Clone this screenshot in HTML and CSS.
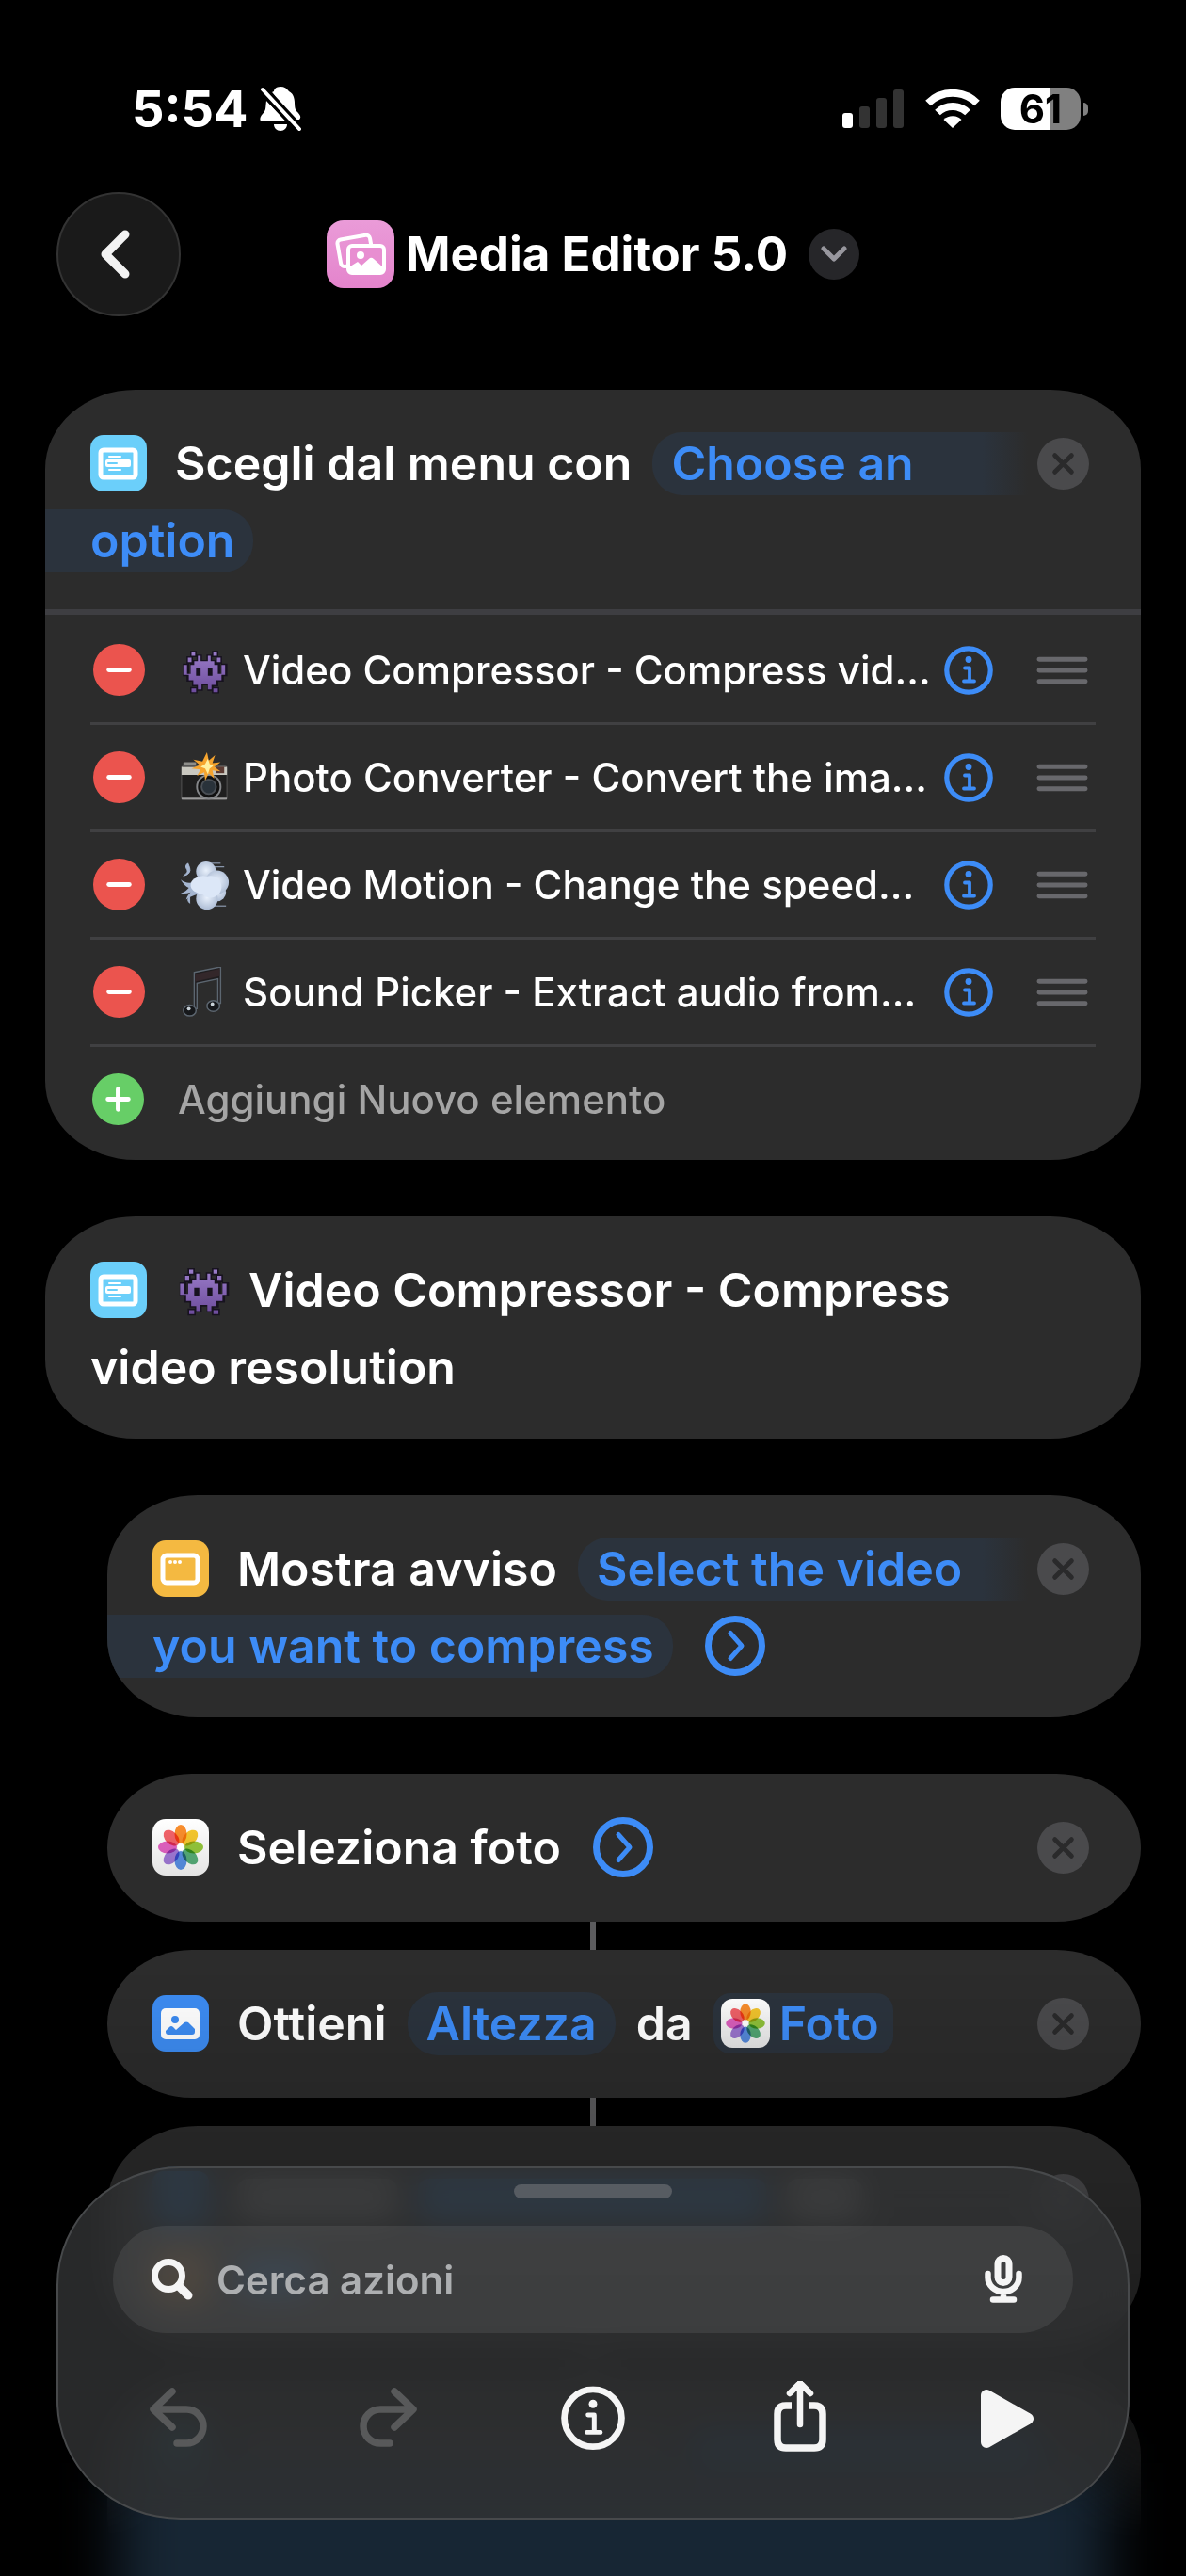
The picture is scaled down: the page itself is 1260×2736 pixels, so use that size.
FILE: index.html
```html
<!DOCTYPE html>
<html lang="it">
<head>
    <meta charset="UTF-8">
    <meta name="viewport" content="width=device-width, initial-scale=1.0">
    <title>Media Editor 5.0</title>
    <link rel="stylesheet" href="styles.css">
</head>
<body>
    <!-- Shared icons -->
    <svg class="sprite" aria-hidden="true">
        <defs>
            <linearGradient id="pink" x1="0" y1="0" x2="0" y2="1">
                <stop offset="0" stop-color="#ea9bd8"/>
                <stop offset="1" stop-color="#e484cc"/>
            </linearGradient>
            <linearGradient id="paper" x1="0" y1="0" x2="0" y2="1">
                <stop offset="0" stop-color="#ffffff"/>
                <stop offset="1" stop-color="#e4e4e4"/>
            </linearGradient>
            <linearGradient id="purple" x1="0" y1="0" x2="0" y2="1">
                <stop offset="0" stop-color="#9a7cc9"/>
                <stop offset="1" stop-color="#6d4c9c"/>
            </linearGradient>
            <radialGradient id="puff" cx="0.5" cy="0.45" r="0.6">
                <stop offset="0" stop-color="#e9f1fc"/>
                <stop offset="1" stop-color="#a9b9d2"/>
            </radialGradient>
        </defs>
        <symbol id="icon-menu" viewBox="0 0 60 60">
            <rect width="60" height="60" rx="14" fill="#6bcffa"/>
            <rect x="11" y="16" width="37" height="29" rx="3" fill="none" stroke="#fff" stroke-width="5"/>
            <rect x="16" y="26" width="27" height="8" rx="2" fill="#fff"/>
            <path d="M20 23h12M20 37h12" stroke="#fff" stroke-width="2" stroke-linecap="round"/>
            <path d="M19 30h9" stroke="#6bcffa" stroke-width="2" stroke-linecap="round"/>
        </symbol>
        <symbol id="icon-alert" viewBox="0 0 60 60">
            <rect width="60" height="60" rx="14" fill="#f4b941"/>
            <rect x="11" y="16" width="37" height="29" rx="4" fill="none" stroke="#fff" stroke-width="5"/>
            <circle cx="19" cy="23" r="2" fill="#fff"/>
            <circle cx="24" cy="23" r="2" fill="#fff"/>
            <circle cx="29" cy="23" r="2" fill="#fff"/>
        </symbol>
        <symbol id="icon-image" viewBox="0 0 60 60">
            <rect width="60" height="60" rx="14" fill="#3d8cf2"/>
            <rect x="9" y="14" width="41" height="33" rx="5" fill="#fff"/>
            <circle cx="24" cy="26" r="4" fill="#3d8cf2"/>
            <path d="M14 38l4-4q2-2 4 0l3 3 9-8q2-1 4 0l7 7v3q0 3-3 3H17q-3 0-3-3z" fill="#3d8cf2"/>
        </symbol>
        <symbol id="icon-photos" viewBox="0 0 60 60">
            <rect width="60" height="60" rx="14" fill="url(#paper)"/>
            <g class="petals">
                <ellipse cx="30" cy="16" rx="6.5" ry="10" fill="#fb8f2d"/>
                <ellipse cx="30" cy="16" rx="6.5" ry="10" fill="#f7c92e" transform="rotate(45 30 30)"/>
                <ellipse cx="30" cy="16" rx="6.5" ry="10" fill="#96ca3c" transform="rotate(90 30 30)"/>
                <ellipse cx="30" cy="16" rx="6.5" ry="10" fill="#57b07a" transform="rotate(135 30 30)"/>
                <ellipse cx="30" cy="16" rx="6.5" ry="10" fill="#5b93ea" transform="rotate(180 30 30)"/>
                <ellipse cx="30" cy="16" rx="6.5" ry="10" fill="#a47cdb" transform="rotate(225 30 30)"/>
                <ellipse cx="30" cy="16" rx="6.5" ry="10" fill="#e563c5" transform="rotate(270 30 30)"/>
                <ellipse cx="30" cy="16" rx="6.5" ry="10" fill="#f5636a" transform="rotate(315 30 30)"/>
            </g>
            <circle cx="30" cy="30" r="3.5" fill="#fff"/>
        </symbol>
        <symbol id="icon-close" viewBox="0 0 56 56">
            <circle cx="28" cy="28" r="28" fill="#4a4a4c"/>
            <path d="M19 19l18 18M37 19L19 37" stroke="#2a2a2b" stroke-width="5" stroke-linecap="round"/>
        </symbol>
        <symbol id="icon-remove" viewBox="0 0 56 56">
            <circle cx="28" cy="28" r="28" fill="#eb544e"/>
            <path d="M17 28h22" stroke="#fff" stroke-width="5" stroke-linecap="round"/>
        </symbol>
        <symbol id="icon-add" viewBox="0 0 56 56">
            <circle cx="28" cy="28" r="28" fill="#67ce67"/>
            <path d="M17 28h22M28 17v22" stroke="#fff" stroke-width="5" stroke-linecap="round"/>
        </symbol>
        <symbol id="icon-info" viewBox="0 0 52 52">
            <circle cx="26" cy="26" r="23.2" fill="none" stroke="currentColor" stroke-width="5.2"/>
            <circle cx="26" cy="14.5" r="3.4" fill="currentColor"/>
            <path d="M22 23.500h5V37M21 37.500h11" fill="none" stroke="currentColor" stroke-width="3.8" stroke-linecap="round" stroke-linejoin="round"/>
        </symbol>
        <symbol id="icon-grip" viewBox="0 0 56 32">
            <path d="M3 4h50M3 16h50M3 28h50" stroke="#68686c" stroke-width="5" stroke-linecap="round"/>
        </symbol>
        <symbol id="icon-expand" viewBox="0 0 64 64">
            <circle cx="32" cy="32" r="28.5" fill="none" stroke="#3d8cf7" stroke-width="7"/>
            <path d="M27 18.500L39 32 27 45.500" fill="none" stroke="#3d8cf7" stroke-width="5" stroke-linecap="round" stroke-linejoin="round"/>
        </symbol>
        <symbol id="emoji-alien" viewBox="0 0 56 56">
            <g stroke="#17121f" stroke-width="3" fill="#17121f">
                <path d="M14 8h4v4h-4zM38 8h4v4h-4zM10 14h4v5h-4zM42 14h4v5h-4zM21 12h3v6h8v-6h3v6h4v4h5v12h4V22h4v11h-4v6h-6v5h-5v5h-4v-6H25v6h-4v-5h-5v-5h-6v-6H6V22h4v12h4V22h3v-4h4zM14 48h5v4h-5zM38 48h5v4h-5z"/>
            </g>
            <path fill="url(#purple)" d="M14 8h4v4h-4zM38 8h4v4h-4zM10 14h4v5h-4zM42 14h4v5h-4zM21 12h3v6h8v-6h3v6h4v4h4v10h4V22h4v11h-4v6h-6v5h-5v5h-4v-6H25v6h-4v-5h-5v-5h-5v-6H5V22h4v10h4V22h4v-4h4zM14 48h5v4h-5zM38 48h5v4h-5z"/>
            <path d="M19 26h5v8h-5zM32 26h5v8h-5z" fill="#17121f"/>
        </symbol>
        <symbol id="emoji-camera" viewBox="0 0 56 56">
            <rect x="5" y="11" width="14" height="6" rx="1" fill="#8e8e8a"/>
            <rect x="3" y="15" width="50" height="37" rx="2" fill="#1f1f1f" stroke="#555" stroke-width="1"/>
            <path d="M3 16h50v9H3z" fill="#c9c8c0"/>
            <rect x="41" y="16" width="9" height="7" fill="#5c3b33"/>
            <path d="M3 51h50" stroke="#9b9b9b" stroke-width="2"/>
            <circle cx="33" cy="38" r="13" fill="#111" stroke="#85878a" stroke-width="2"/>
            <circle cx="33" cy="38" r="8" fill="#29323a" stroke="#4a4f55" stroke-width="2"/>
            <path d="M31 0l2 9 7-6-3 9 9-1-7 5 7 5-9-1 2 9-6-6-4 8-1-9-8 4 4-7-10-1 9-4-7-6 10 2z" fill="#f6a42e"/>
            <path d="M32 7l2 6 4 2-4 3-2 6-3-6-5-2 5-3z" fill="#fff0a0"/>
        </symbol>
        <symbol id="emoji-wind" viewBox="0 0 56 56">
            <path d="M2 22q10 8 24-2l4 16q-14 2-22 8 2-6 5-8-6 2-11 1 6-2 9-6-5-2-9-9z" fill="#a5b6d1"/>
            <path d="M10 4q-4 3-1 7 2 3-4 7 9-2 7-9zM33 4h13M36 8h14M38 51h14M12 41q-4 3 0 7z" fill="#a5b6d1" stroke="#a5b6d1"/>
            <circle cx="42" cy="36" r="10" fill="url(#puff)"/>
            <circle cx="30" cy="13" r="11" fill="url(#puff)"/>
            <circle cx="31" cy="43" r="12" fill="url(#puff)"/>
            <circle cx="42" cy="25" r="13" fill="url(#puff)"/>
            <ellipse cx="27" cy="28" rx="14" ry="10" fill="#dce7f7"/>
            <circle cx="35" cy="30" r="12" fill="#dce7f7"/>
        </symbol>
        <symbol id="emoji-note" viewBox="0 0 56 56">
            <path d="M17 6l29-6v40h-3V13l-23 5v28h-3z" fill="#1f1d1f" stroke="#5c6670" stroke-width="1.5"/>
            <path d="M18 8l27-6v8l-27 6z" fill="#33272a"/>
            <ellipse cx="12" cy="48" rx="7" ry="6" fill="#16181b" stroke="#5c6670" stroke-width="1.5"/>
            <ellipse cx="38" cy="43" rx="7" ry="6" fill="#16181b" stroke="#5c6670" stroke-width="1.5"/>
            <circle cx="11" cy="46" r="2" fill="#c9d2d8"/>
            <circle cx="37" cy="41" r="2" fill="#c9d2d8"/>
        </symbol>
    </svg>

    <div class="screen">
        <div class="status-bar">
            <div class="status-left">
                <span class="clock">5:54</span>
                <svg class="bell" viewBox="0 0 44 48">
                    <path d="M22 1c-5 0-7 3-7 5l-2 1 22 29h7c3-3 0-6-3-9-3-4-1-9-3-15-1-4-4-5-6-7-1-2-4-4-8-4zM7 16c-1 7 0 10-4 14-3 3-4 8 0 8h25zM15 41h14c0 4-3 7-7 7s-7-3-7-7z" fill="#fff"/>
                    <path d="M3 4l39 42" stroke="#000" stroke-width="10"/>
                    <path d="M3 4l39 42" stroke="#fff" stroke-width="4" stroke-linecap="round"/>
                </svg>
            </div>
            <div class="status-right">
                <svg class="signal" viewBox="0 0 66 42">
                    <rect y="26" width="11" height="16" rx="3" fill="#fff"/>
                    <rect x="18" y="19" width="11" height="23" rx="3" fill="#333"/>
                    <rect x="36" y="10" width="11" height="32" rx="3" fill="#333"/>
                    <rect x="54" y="1" width="11" height="41" rx="3" fill="#333"/>
                </svg>
                <svg class="wifi" viewBox="0 0 58 42">
                    <path d="M3 15.500a37 37 0 0 1 52 0M13 25.500a23 23 0 0 1 32 0" fill="none" stroke="#fff" stroke-width="8"/>
                    <path d="M19.500 33a14 14 0 0 1 19 0L29 42z" fill="#fff"/>
                </svg>
                <div class="battery">61</div>
            </div>
        </div>

        <header class="top-bar">
            <button class="back" aria-label="Indietro">
                <svg viewBox="0 0 32 52"><path d="M27 5L6 26l21 21" fill="none" stroke="#f2f2f2" stroke-width="9" stroke-linecap="round" stroke-linejoin="round"/></svg>
            </button>
            <div class="title">
                <svg class="title-icon" viewBox="0 0 72 72">
                    <rect width="72" height="72" rx="18" fill="url(#pink)"/>
                    <rect x="13" y="18" width="35" height="29" rx="4" fill="none" stroke="#fff" stroke-width="4" transform="rotate(-10 30 32)"/>
                    <rect x="21" y="25" width="42" height="33" rx="6" fill="#e88ed1"/>
                    <rect x="23" y="27" width="38" height="29" rx="4" fill="none" stroke="#fff" stroke-width="4"/>
                    <circle cx="36" cy="37" r="4" fill="#fff"/>
                    <path d="M25 49l8-5 4 4 9-8q2-1 4 1l10 9v7H24z" fill="#fff"/>
                </svg>
                <h1>Media Editor 5.0</h1>
                <button class="title-menu" aria-label="Opzioni">
                    <svg viewBox="0 0 28 18"><path d="M3 3l11 11L25 3" fill="none" stroke="#98979e" stroke-width="5" stroke-linecap="round" stroke-linejoin="round"/></svg>
                </button>
            </div>
        </header>

        <main class="actions">
            <section class="card">
                <div class="card-body card-body-menu">
                    <div class="line">
                        <svg class="app-icon"><use href="#icon-menu"/></svg>
                        <span>Scegli dal menu con</span>
                        <button class="token token-start">Choose an</button>
                        <button class="close" aria-label="Rimuovi"><svg><use href="#icon-close"/></svg></button>
                    </div>
                    <div class="line">
                        <button class="token token-end">option</button>
                    </div>
                </div>
                <ul class="menu-list">
                    <li class="menu-item">
                        <button class="round" aria-label="Elimina"><svg><use href="#icon-remove"/></svg></button>
                        <svg class="emoji"><use href="#emoji-alien"/></svg>
                        <span class="menu-name">Video Compressor - Compress vid…</span>
                        <button class="info" aria-label="Info"><svg><use href="#icon-info"/></svg></button>
                        <svg class="grip"><use href="#icon-grip"/></svg>
                    </li>
                    <li class="menu-item">
                        <button class="round" aria-label="Elimina"><svg><use href="#icon-remove"/></svg></button>
                        <svg class="emoji"><use href="#emoji-camera"/></svg>
                        <span class="menu-name">Photo Converter - Convert the ima…</span>
                        <button class="info" aria-label="Info"><svg><use href="#icon-info"/></svg></button>
                        <svg class="grip"><use href="#icon-grip"/></svg>
                    </li>
                    <li class="menu-item">
                        <button class="round" aria-label="Elimina"><svg><use href="#icon-remove"/></svg></button>
                        <svg class="emoji"><use href="#emoji-wind"/></svg>
                        <span class="menu-name">Video Motion - Change the speed…</span>
                        <button class="info" aria-label="Info"><svg><use href="#icon-info"/></svg></button>
                        <svg class="grip"><use href="#icon-grip"/></svg>
                    </li>
                    <li class="menu-item">
                        <button class="round" aria-label="Elimina"><svg><use href="#icon-remove"/></svg></button>
                        <svg class="emoji"><use href="#emoji-note"/></svg>
                        <span class="menu-name">Sound Picker - Extract audio from…</span>
                        <button class="info" aria-label="Info"><svg><use href="#icon-info"/></svg></button>
                        <svg class="grip"><use href="#icon-grip"/></svg>
                    </li>
                    <li class="menu-item">
                        <button class="round" aria-label="Aggiungi"><svg><use href="#icon-add"/></svg></button>
                        <input class="new-item" type="text" placeholder="Aggiungi Nuovo elemento" aria-label="Aggiungi Nuovo elemento">
                    </li>
                </ul>
            </section>

            <section class="card">
                <div class="card-body">
                    <div class="line">
                        <svg class="app-icon"><use href="#icon-menu"/></svg>
                        <svg class="emoji emoji-large"><use href="#emoji-alien"/></svg>
                        <span>Video Compressor - Compress</span>
                    </div>
                    <div class="line"><span>video resolution</span></div>
                </div>
            </section>

            <section class="card nested">
                <div class="card-body">
                    <div class="line">
                        <svg class="app-icon"><use href="#icon-alert"/></svg>
                        <span>Mostra avviso</span>
                        <button class="token token-start">Select the video</button>
                        <button class="close" aria-label="Rimuovi"><svg><use href="#icon-close"/></svg></button>
                    </div>
                    <div class="line">
                        <button class="token token-end">you want to compress</button>
                        <button class="expand" aria-label="Mostra altro"><svg><use href="#icon-expand"/></svg></button>
                    </div>
                </div>
            </section>

            <section class="card nested">
                <div class="card-body">
                    <div class="line">
                        <svg class="app-icon"><use href="#icon-photos"/></svg>
                        <span>Seleziona foto</span>
                        <button class="expand" aria-label="Mostra altro"><svg><use href="#icon-expand"/></svg></button>
                        <button class="close" aria-label="Rimuovi"><svg><use href="#icon-close"/></svg></button>
                    </div>
                </div>
            </section>

            <section class="card nested linked">
                <div class="card-body">
                    <div class="line">
                        <svg class="app-icon"><use href="#icon-image"/></svg>
                        <span>Ottieni</span>
                        <button class="token">Altezza</button>
                        <span>da</span>
                        <button class="token variable"><svg><use href="#icon-photos"/></svg>Foto</button>
                        <button class="close" aria-label="Rimuovi"><svg><use href="#icon-close"/></svg></button>
                    </div>
                </div>
            </section>

            <!-- Cards that are scrolled under the toolbar -->
            <section class="card nested linked" aria-hidden="true">
                <div class="card-body">
                    <div class="line">
                        <i class="ghost ghost-icon blue"></i>
                        <i class="ghost ghost-word"></i>
                        <i class="ghost ghost-token blue"></i>
                        <i class="ghost ghost-short"></i>
                        <span class="close"><svg><use href="#icon-close"/></svg></span>
                    </div>
                    <div class="line">
                        <i class="ghost ghost-icon orange"></i>
                        <i class="ghost ghost-short blue"></i>
                    </div>
                </div>
            </section>
            <section class="card nested linked" aria-hidden="true">
                <div class="card-body">
                    <div class="line">
                        <i class="ghost ghost-icon teal"></i>
                        <i class="ghost ghost-wide"></i>
                        <i class="ghost ghost-token blue"></i>
                    </div>
                    <div class="line"></div>
                </div>
            </section>
        </main>

        <div class="bottom-fade"><div class="bottom-glow"></div></div>

        <footer class="sheet">
            <div class="grabber"></div>
            <div class="search">
                <svg class="search-icon" viewBox="0 0 44 44"><circle cx="18" cy="18" r="14.500" fill="none" stroke="#f5f5f5" stroke-width="7"/><path d="M29 29l10 10" stroke="#f5f5f5" stroke-width="9" stroke-linecap="round"/></svg>
                <input type="text" placeholder="Cerca azioni" aria-label="Cerca azioni">
                <button class="mic" aria-label="Detta">
                    <svg viewBox="0 0 40 52">
                        <rect x="14" y="3.500" width="12" height="26" rx="6" fill="none" stroke="#f5f5f5" stroke-width="7"/>
                        <path d="M3.500 20v4a16.500 15 0 0 0 33 0v-4M20 39v8M9 47.500h22" fill="none" stroke="#f5f5f5" stroke-width="6.500" stroke-linecap="round"/>
                    </svg>
                </button>
            </div>
            <div class="toolbar">
                <button class="tool disabled" aria-label="Annulla" disabled>
                    <svg viewBox="0 0 76 76"><path d="M30 11L10 30l20 19M11 30h34a18 18 0 0 1 0 36h-10" fill="none" stroke="currentColor" stroke-width="7.500" stroke-linecap="round" stroke-linejoin="round"/></svg>
                </button>
                <button class="tool disabled" aria-label="Ripeti" disabled>
                    <svg viewBox="0 0 76 76"><path d="M46 11l20 19-20 19M65 30H31a18 18 0 0 0 0 36h10" fill="none" stroke="currentColor" stroke-width="7.500" stroke-linecap="round" stroke-linejoin="round"/></svg>
                </button>
                <button class="tool" aria-label="Dettagli">
                    <svg viewBox="-3 -4 58 58"><use href="#icon-info" width="52" height="52"/></svg>
                </button>
                <button class="tool" aria-label="Condividi">
                    <svg viewBox="0 0 76 76"><path d="M29 26h-6q-9 0-9 9v27q0 9 9 9h30q9 0 9-9V35q0-9-9-9h-6" fill="none" stroke="currentColor" stroke-width="7.500"/><path d="M38 46V2M27 13L38 2l11 11" fill="none" stroke="currentColor" stroke-width="6.500" stroke-linecap="round" stroke-linejoin="round"/></svg>
                </button>
                <button class="tool" aria-label="Esegui">
                    <svg viewBox="0 0 76 76"><path d="M17 15v50l44-25z" fill="currentColor" stroke="currentColor" stroke-width="12" stroke-linejoin="round"/></svg>
                </button>
            </div>
        </footer>
    </div>
</body>
</html>
```
FILE: styles.css
```css
* {
    box-sizing: border-box;
}
body {
    margin: 0;
    background-color: #000;
    color: #fff;
    font-family: Inter, "Liberation Sans", sans-serif;
}
button {
    display: flex;
    flex: none;
    align-items: center;
    justify-content: center;
    padding: 0;
    border: 0;
    background: none;
    color: inherit;
    font: inherit;
}
svg {
    display: block;
    flex: none;
}
input {
    min-width: 0;
    flex: 1;
    padding: 0;
    border: 0;
    outline: 0;
    background: none;
    color: #fff;
    font: inherit;
}
.sprite {
    position: absolute;
    width: 0;
    height: 0;
}
.screen {
    display: flex;
    flex-direction: column;
    height: 100vh;
    overflow: hidden;
}

/* Status bar */
.status-bar {
    display: flex;
    align-items: center;
    justify-content: space-between;
    padding: 84px 104px 0 140px;
    height: 146px;
}
.status-left,
.status-right {
    display: flex;
    align-items: center;
}
.clock {
    font-size: 54px;
    font-weight: 700;
}
.bell {
    width: 44px;
    height: 48px;
    margin-left: 12px;
}
.signal {
    width: 66px;
    height: 42px;
}
.wifi {
    width: 58px;
    height: 42px;
    margin: 0 22px;
}
.battery {
    position: relative;
    width: 85px;
    margin-right: 8px;
    border-radius: 15px;
    background: linear-gradient(90deg, #fff 61%, #808080 61%);
    color: #000;
    font-size: 42px;
    font-weight: 700;
    line-height: 45px;
    text-align: center;
}
.battery::after {
    content: "";
    position: absolute;
    top: 16px;
    right: -8px;
    width: 5px;
    height: 14px;
    border-radius: 0 5px 5px 0;
    background-color: #808080;
}

/* Title */
.top-bar {
    display: grid;
    grid-template-columns: 132px 1fr 132px;
    align-items: center;
    padding: 58px 60px 0;
}
.back {
    width: 132px;
    height: 132px;
    border: 2px solid #333;
    border-radius: 50%;
    background-color: #1a1a1a;
}
.back svg {
    width: 32px;
    height: 52px;
    margin-right: 8px;
}
.title {
    display: flex;
    align-items: center;
    justify-content: center;
}
.title-icon {
    width: 72px;
    height: 72px;
}
.title h1 {
    margin: 0 22px 0 12px;
    font-size: 51px;
    font-weight: 700;
    line-height: 72px;
}
.title-menu {
    width: 54px;
    height: 54px;
    border-radius: 50%;
    background-color: #262629;
}
.title-menu svg {
    width: 28px;
    height: 18px;
}

/* Action cards */
.actions {
    flex: 1;
    min-height: 0;
    overflow-y: auto;
    padding: 78px 48px 0;
    scrollbar-width: none;
}
.card {
    position: relative;
    margin-bottom: 60px;
    border-radius: 96px / 84px;
    background-color: #2c2c2c;
}
.nested {
    margin-left: 66px;
}
.linked {
    margin-top: -30px;
}
.linked::before {
    content: "";
    position: absolute;
    top: -30px;
    left: 513px;
    width: 6px;
    height: 30px;
    background-color: #5c5c5e;
}
.card-body {
    min-height: 157px;
    padding: 37px 55px 35px 48px;
    border-radius: inherit;
    overflow: hidden;
    font-size: 50px;
    font-weight: 600;
    line-height: 82px;
    white-space: nowrap;
}
.card-body-menu {
    padding-bottom: 32px;
    border-bottom: 6px solid #3e3e42;
    border-radius: 96px 96px 0 0 / 84px 84px 0 0;
}
.line {
    display: flex;
    align-items: center;
    gap: 22px;
    height: 82px;
}
.app-icon {
    width: 60px;
    height: 60px;
    margin-right: 8px;
}
.petals ellipse {
    mix-blend-mode: multiply;
}
.close {
    flex: none;
    margin-left: auto;
}
.close svg,
.round svg {
    width: 55px;
    height: 55px;
}
.expand {
    margin-left: 12px;
}
.expand svg {
    width: 64px;
    height: 64px;
}
.token {
    height: 67px;
    padding: 0 20px;
    border-radius: 32px;
    background-color: #2b333d;
    color: #3d8cf7;
}
.token-start {
    flex: 1;
    justify-content: flex-start;
    margin-right: -12px;
    border-radius: 32px 0 0 32px;
    background: linear-gradient(90deg, #2b333d calc(100% - 48px), #2c2c2c);
}
.token-end {
    margin-left: -48px;
    padding-left: 48px;
    border-radius: 0 32px 32px 0;
}
.variable {
    height: 64px;
    padding: 0 15px 0 8px;
    gap: 10px;
    border-radius: 18px;
}
.variable svg {
    width: 52px;
    height: 52px;
}

/* Menu options */
.menu-list {
    margin: 0;
    padding: 3px 48px 6px;
    list-style: none;
    font-size: 42px;
    font-weight: 500;
}
.menu-item {
    display: flex;
    align-items: center;
    height: 114px;
    padding: 0 8px 0 3px;
    border-bottom: 3px solid #404042;
    white-space: nowrap;
}
.menu-item:last-child {
    padding-left: 2px;
    border-color: transparent;
}
.emoji {
    width: 54px;
    height: 54px;
    margin: 0 14px 0 36px;
}
.emoji-large {
    width: 60px;
    height: 60px;
    margin: 0 -4px 0 0;
}
.menu-name {
    flex: 1;
    min-width: 0;
}
.info {
    margin-right: 46px;
    color: #3d8cf7;
}
.info svg {
    width: 52px;
    height: 52px;
}
.grip {
    width: 55px;
    height: 32px;
}
.new-item {
    margin-left: 36px;
}
.new-item::placeholder {
    color: #a5a5a5;
    opacity: 1;
}

/* Content under the toolbar */
.ghost {
    height: 44px;
    border-radius: 12px;
    background-color: #777;
}
.ghost-icon {
    width: 60px;
    height: 60px;
    margin-right: 8px;
}
.ghost-word {
    width: 170px;
}
.ghost-token {
    width: 370px;
}
.ghost-short {
    width: 80px;
}
.ghost-wide {
    width: 460px;
    background-color: #444;
}
.blue {
    background-color: #1f5f9e;
}
.orange {
    background-color: #a06a2c;
}
.teal {
    background-color: #2b7f95;
}
.bottom-fade {
    position: fixed;
    right: 0;
    bottom: 0;
    left: 0;
    height: 640px;
    overflow: hidden;
    background: linear-gradient(rgba(0, 0, 0, 0), rgba(0, 0, 0, 0.16) 200px, rgba(0, 0, 0, 0.3) 350px, rgba(0, 0, 0, 0.6) 520px, #000 600px);
    pointer-events: none;
}
.bottom-glow {
    position: absolute;
    right: 84px;
    bottom: -80px;
    left: 126px;
    height: 200px;
    background-color: #172634;
    filter: blur(30px);
}

/* Floating toolbar */
.sheet {
    position: fixed;
    right: 60px;
    bottom: 60px;
    left: 60px;
    padding: 17px 58px 39px;
    border: 2px solid #47494b;
    border-radius: 132px / 126px;
    background-color: rgba(50, 51, 52, 0.8);
    backdrop-filter: blur(16px);
}
.grabber {
    width: 168px;
    height: 15px;
    margin: 0 auto 29px;
    border-radius: 8px;
    background-color: #575c62;
}
.search {
    display: flex;
    align-items: center;
    height: 114px;
    padding: 0 54px 0 41px;
    border-radius: 57px;
    background-color: rgba(255, 255, 255, 0.08);
    font-size: 42px;
    font-weight: 600;
}
.search-icon {
    width: 44px;
    height: 44px;
    margin-right: 25px;
}
.search input::placeholder {
    color: #adafb1;
    opacity: 1;
}
.mic svg {
    width: 40px;
    height: 52px;
}
.toolbar {
    display: flex;
    justify-content: space-between;
    padding: 51px 33px 0;
    height: 157px;
}
.tool {
    width: 76px;
    height: 76px;
    color: #f5f5f5;
}
.tool svg {
    width: 76px;
    height: 76px;
}
.disabled {
    color: #58595a;
}
```
